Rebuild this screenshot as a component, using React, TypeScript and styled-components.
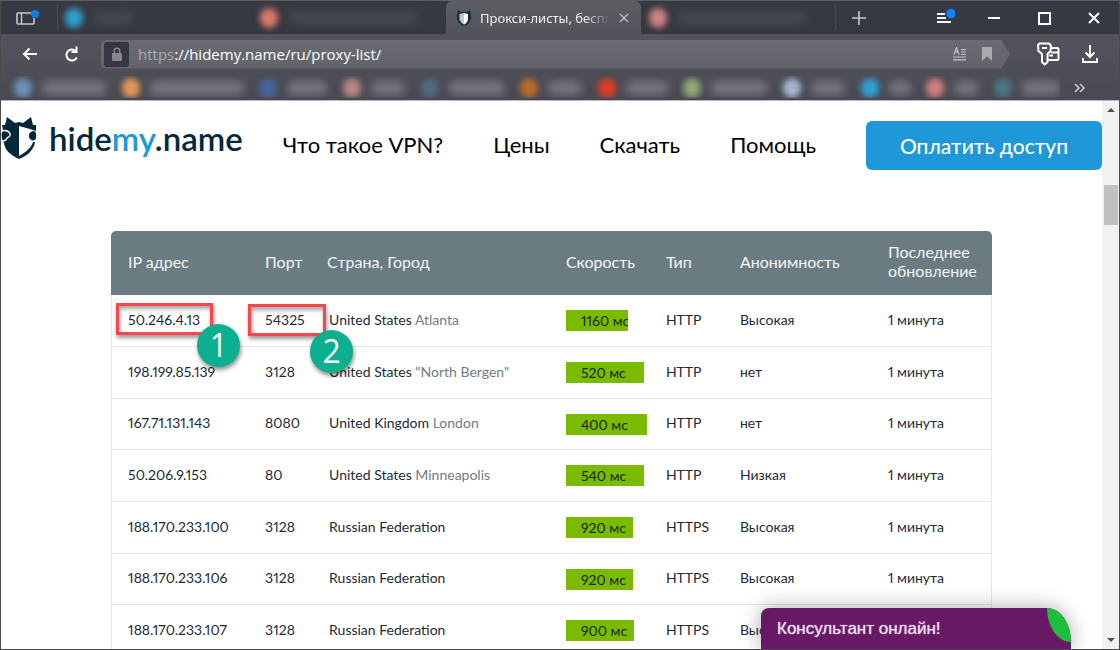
import React from 'react';
import styled, { createGlobalStyle } from 'styled-components';

const GlobalStyle = createGlobalStyle`
  *, *::before, *::after { box-sizing: border-box; }
  html, body { margin: 0; padding: 0; }
  body { font-family: Lato, sans-serif; color: #000; background: #fff; overflow: hidden; }
  button { font: inherit; color: inherit; border: 0; padding: 0; background: none; }
  a { color: inherit; text-decoration: none; }
  svg { display: block; flex: none; }
`;

const Window = styled.div`
  height: 100vh;
  display: flex;
  flex-direction: column;
  border: 1px solid #4b4b4d;
  border-top-color: #5d5e59;
  overflow: hidden;
`;

const TabStrip = styled.div`
  display: flex;
  align-items: stretch;
  flex: none;
  height: 33px;
  background: linear-gradient(#373944, #353741);
  color: #fff;
`;

const PanelButton = styled.button`
  width: 56px;
  display: flex;
  align-items: center;
  justify-content: center;
  padding-right: 2px;
`;

const TabRow = styled.div`
  display: flex;
  flex: 1;
  min-width: 0;
`;

const Tab = styled.button<{ $divided?: boolean }>`
  flex: 0 0 25%;
  min-width: 0;
  overflow: hidden;
  display: flex;
  align-items: center;
  gap: 10px;
  padding: 0 8px;
  position: relative;
  &::before {
    content: '';
    display: ${p => (p.$divided ? 'block' : 'none')};
    position: absolute;
    left: 0;
    top: 4px;
    bottom: 4px;
    width: 1px;
    background: #4a4c56;
  }
`;

const ActiveTab = styled.div`
  flex: 0 0 25%;
  min-width: 0;
  display: flex;
  align-items: center;
  gap: 9px;
  padding: 0 12px 0 11px;
  border-radius: 6px 6px 0 0;
  background: linear-gradient(#5c5d65, #52535b);
  font: 13px/20px 'Noto Sans', 'Open Sans', sans-serif;
  color: #f2f2f3;
`;

const TabTitle = styled.span`
  flex: 1;
  min-width: 0;
  overflow: hidden;
  white-space: nowrap;
  mask-image: linear-gradient(90deg, #000 80%, transparent);
`;

const Dot = styled.span<{ $color: string }>`
  flex: none;
  width: 18px;
  height: 20px;
  border-radius: 9px;
  background: ${p => p.$color};
  filter: blur(3px);
`;

const Smudge = styled.span<{ $w: number; $tone?: string }>`
  flex: none;
  width: ${p => p.$w}px;
  height: 14px;
  border-radius: 6px;
  background: ${p => p.$tone ?? '#74757e'};
  filter: blur(4px);
`;

const NewTab = styled.button`
  width: 48px;
  display: flex;
  align-items: center;
  justify-content: center;
  position: relative;
  color: #c9c9cc;
  &::before {
    content: '';
    position: absolute;
    left: 0;
    top: 4px;
    bottom: 4px;
    width: 1px;
    background: #4a4c56;
  }
`;

const WindowControls = styled.div`
  display: flex;
  margin-left: 36px;
`;

const WindowButton = styled.button`
  width: 50px;
  display: flex;
  align-items: center;
  justify-content: center;
`;

const Toolbar = styled.div`
  flex: none;
  background: linear-gradient(#53545c, #484952);
  color: #fff;
  border-bottom: 1px solid #b9b9bb;
`;

const AddressRow = styled.div`
  display: flex;
  align-items: center;
  height: 40px;
  padding: 0 8px;
`;

const ToolButton = styled.button`
  width: 42px;
  height: 36px;
  display: flex;
  align-items: center;
  justify-content: center;
`;

const AddressBar = styled.form`
  flex: 1;
  min-width: 0;
  display: flex;
  align-items: center;
  height: 29px;
  margin: 0 17px 0 8px;
  padding: 0 10px 0 3px;
  border-radius: 5px 0 0 5px;
  background: linear-gradient(#6a6b72, #62636b);
  clip-path: polygon(0 0, calc(100% - 9px) 0, 100% 50%, calc(100% - 9px) 100%, 0 100%);
`;

const LockBox = styled.button`
  width: 25px;
  height: 25px;
  border-radius: 3px;
  background: #363742;
  display: flex;
  align-items: center;
  justify-content: center;
`;

const Address = styled.div`
  flex: 1;
  margin-left: 9px;
  font: 15px/24px 'Open Sans', 'Noto Sans', sans-serif;
  color: #fff;
  white-space: nowrap;
`;

const Scheme = styled.span`
  color: #aaabaf;
`;

const BarIcon = styled.button`
  width: 27px;
  display: flex;
  justify-content: center;
  color: #c4c4c8;
`;

const BookmarkRow = styled.div`
  display: flex;
  align-items: center;
  height: 26px;
`;

const Bookmarks = styled.div`
  flex: 1;
  height: 22px;
  overflow: hidden;
  display: flex;
  align-items: center;
  justify-content: space-between;
  padding: 2px 0 0 13px;
`;

const Bookmark = styled.span`
  display: flex;
  align-items: center;
  gap: 10px;
`;

const MoreButton = styled.button`
  width: 59px;
  height: 22px;
  display: flex;
  align-items: center;
  padding: 2px 0 0 14px;
  color: #d5d5d8;
`;

const Viewport = styled.div`
  flex: 1;
  min-height: 0;
  display: flex;
  position: relative;
`;

const Page = styled.div`
  flex: 1;
  min-width: 0;
  overflow: hidden;
`;

const SiteHeader = styled.header`
  display: flex;
  align-items: center;
  height: 49px;
  margin-top: 20px;
`;

const Logo = styled.a`
  display: flex;
  align-items: center;
  gap: 12px;
  padding-bottom: 16px;
  font-size: 33px;
  line-height: 36px;
  font-weight: 600;
  color: #04273a;
`;

const LogoAccent = styled.span`
  color: #1e98d9;
`;

const Nav = styled.nav`
  display: flex;
  flex: 1;
  gap: 50px;
  margin-left: 40px;
  padding-bottom: 1px;
  font-size: 22px;
  line-height: 28px;
  white-space: nowrap;
`;

const PayButton = styled.button`
  width: 236px;
  height: 49px;
  border-radius: 6px;
  background: #1e98d9;
  color: #fff;
  font-size: 21px;
  line-height: 28px;
  font-weight: 500;
`;

const ProxyTable = styled.table`
  width: 80%;
  margin: 61px auto 0;
  table-layout: fixed;
  border-collapse: separate;
  border-spacing: 0;
  font-size: 14px;
  line-height: 18px;
  font-variant-numeric: proportional-nums;
  color: #1d2b35;
`;

const Column = styled.col<{ $w?: number }>`
  width: ${p => (p.$w ? `${p.$w}px` : 'auto')};
`;

const HeadCell = styled.th`
  height: 64px;
  padding: 0 0 4px 16px;
  background: #6a7c81;
  color: #f4f6f6;
  font-size: 16px;
  line-height: 19px;
  font-weight: 400;
  text-align: left;
  &:first-child { border-top-left-radius: 5px; padding-left: 17px; }
  &:last-child { border-top-right-radius: 5px; }
`;

const Row = styled.tr`
  height: 52px;
  &:nth-child(3n) { height: 51px; }
`;

const Cell = styled.td`
  position: relative;
  padding: 0 0 2px 16px;
  border-bottom: 1px solid #e4e6e7;
  white-space: nowrap;
  &:first-child { border-left: 1px solid #e4e6e7; }
  &:last-child { border-right: 1px solid #e4e6e7; }
`;

const PlaceCell = styled(Cell)`
  padding-left: 18px;
`;

const SpeedCell = styled(Cell)`
  padding-bottom: 0;
`;

const City = styled.span`
  color: #6f7c83;
`;

const SpeedBar = styled.div`
  height: 21px;
  padding-left: 15px;
  overflow: hidden;
  background: #7aba00;
  line-height: 21px;
  color: #16280a;
`;

const Frame = styled.span<{ $left: number; $top: number; $w: number }>`
  position: absolute;
  left: ${p => p.$left}px;
  top: ${p => p.$top}px;
  width: ${p => p.$w}px;
  height: 32px;
  border: 3px solid #f8464c;
  box-shadow: 1px 3px 4px rgba(0, 0, 0, 0.4), inset 1px 3px 4px rgba(0, 0, 0, 0.35);
`;

const StepBadge = styled.span<{ $top: number }>`
  position: absolute;
  z-index: 2;
  right: -30px;
  top: ${p => p.$top}px;
  width: 43px;
  height: 43px;
  border-radius: 50%;
  background: #0caf90;
  box-shadow: 1px 3px 4px rgba(0, 0, 0, 0.45);
  color: #fff;
  font: 500 32px/42px 'Open Sans', sans-serif;
  text-align: center;
`;

const ScrollBar = styled.div`
  flex: none;
  width: 17px;
  padding: 6px 0;
  background: #f1f1f1;
  display: flex;
  flex-direction: column;
  align-items: center;
`;

const Thumb = styled.div`
  width: 14px;
  height: 40px;
  margin: 72px 0 auto;
  background: #c1c1c1;
`;

const Chat = styled.button`
  position: absolute;
  right: 48px;
  bottom: 0;
  width: 310px;
  height: 41px;
  border-radius: 8px 24px 0 0 / 8px 34px 0 0;
  background: #681965;
  color: #eadcea;
  padding-left: 16px;
  box-shadow: 0 0 20px rgba(0, 0, 0, 0.35);
  font: 17px/38px 'Liberation Sans', Arial, sans-serif;
  text-shadow: 0 0 1px currentColor;
  text-align: left;
`;

const Leaf = styled.span`
  position: absolute;
  right: 0;
  top: 0;
  width: 24px;
  height: 34px;
  border-radius: 0 100% 0 100%;
  background: #1cbf3c;
`;

const WolfShield = () => (
  <svg width="36" height="42" viewBox="0 0 36 42" aria-hidden="true">
    <path fill="#04273a" d="M6 0 14 6 18 5 22 6 30 0 32 8 35 8 35 14 29 12 18 9V39L18 42C10 38 4 34 3 26C0 22 0 14 2 13L1 8 4 8Z" />
    <path fill="#04273a" d="M30 15C34 12 36 16 35 21C34 25 29 24 28 20C27.500 18 28 16 30 15Z" />
    <path fill="#04273a" d="M34 25C33 33 26 39 18 42V39C25 35 30 31 32 25Z" />
    <path fill="none" stroke="#fff" strokeWidth="1.4" d="M0 14.500C5 12 10 15 9 18.500C8 21 6 20 5.500 22C5 24 2 24 0 24" />
  </svg>
);

const Favicon = () => (
  <svg width="14" height="18" viewBox="0 0 14 18" aria-hidden="true">
    <path fill="#17303d" d="M1 1 4 3 7 2.500 10 3 13 1 14 6V10C13 13 11 16 7 17C3 16 1 13 0 10V6Z" />
    <path fill="#b9c9cd" d="M7 4 2.500 5V11C4 13 5 14.500 7 15.500Z" />
    <path fill="#fff" d="M7 4 11 5V11C10 13 9 14.500 7 15.500Z" />
  </svg>
);

type Mark = { name: string; color: string; w: number };

const bookmarks: Mark[] = [
  { name: 'b1', color: '#6e90b8', w: 64 },
  { name: 'b2', color: '#e09a58', w: 94 },
  { name: 'b3', color: '#44659c', w: 40 },
  { name: 'b4', color: '#b98585', w: 34 },
  { name: 'b5', color: '#4f6a80', w: 56 },
  { name: 'b6', color: '#b96a2a', w: 34 },
  { name: 'b7', color: '#e03c26', w: 42 },
  { name: 'b8', color: '#93a875', w: 56 },
  { name: 'b9', color: '#a9b6d2', w: 34 },
  { name: 'b10', color: '#2fa3d6', w: 22 },
  { name: 'b11', color: '#d07f7f', w: 24 },
  { name: 'b12', color: '#4a7680', w: 38 },
];

type Proxy = {
  ip: string; port: string; country: string; city?: string;
  speed: number; bar: number; type: string; anon: string;
};

const proxies: Proxy[] = [
  { ip: '50.246.4.13', port: '54325', country: 'United States', city: 'Atlanta', speed: 1160, bar: 62, type: 'HTTP', anon: 'Высокая' },
  { ip: '198.199.85.139', port: '3128', country: 'United States', city: '"North Bergen"', speed: 520, bar: 78, type: 'HTTP', anon: 'нет' },
  { ip: '167.71.131.143', port: '8080', country: 'United Kingdom', city: 'London', speed: 400, bar: 81, type: 'HTTP', anon: 'нет' },
  { ip: '50.206.9.153', port: '80', country: 'United States', city: 'Minneapolis', speed: 540, bar: 78, type: 'HTTP', anon: 'Низкая' },
  { ip: '188.170.233.100', port: '3128', country: 'Russian Federation', speed: 920, bar: 67, type: 'HTTPS', anon: 'Высокая' },
  { ip: '188.170.233.106', port: '3128', country: 'Russian Federation', speed: 920, bar: 67, type: 'HTTPS', anon: 'Высокая' },
  { ip: '188.170.233.107', port: '3128', country: 'Russian Federation', speed: 900, bar: 68, type: 'HTTPS', anon: 'Высокая' },
];

export default function App() {
  return (
    <>
      <GlobalStyle />
      <Window>
        <TabStrip>
          <PanelButton aria-label="Боковая панель">
            <svg width="24" height="16" viewBox="0 0 24 16" fill="none">
              <rect x="1" y="3" width="17" height="11" rx="1" stroke="#c8c8cc" strokeWidth="1.6" />
              <path d="M5.5 3V14" stroke="#c8c8cc" strokeWidth="1.4" />
              <circle cx="19" cy="4" r="4.2" fill="#0b7fe0" />
            </svg>
          </PanelButton>
          <TabRow>
            <Tab $divided aria-label="Вкладка"><Dot $color="#2f9fcb" /><Smudge $w={40} $tone="#454750" /></Tab>
            <Tab aria-label="Вкладка"><Dot $color="#d97a69" /><Smudge $w={130} $tone="#454750" /></Tab>
            <ActiveTab>
              <Favicon />
              <TabTitle>Прокси-листы, бесплатные</TabTitle>
              <svg width="10" height="10" viewBox="0 0 10 10" stroke="#c6c6ca" strokeWidth="1.2"><path d="M1 1 9 9M9 1 1 9" /></svg>
            </ActiveTab>
            <Tab aria-label="Вкладка"><Dot $color="#cf8285" /><Smudge $w={130} $tone="#454750" /></Tab>
          </TabRow>
          <NewTab aria-label="Новая вкладка">
            <svg width="16" height="16" viewBox="0 0 16 16" stroke="currentColor" strokeWidth="1.6"><path d="M8 1V15M1 8H15" /></svg>
          </NewTab>
          <WindowControls>
            <WindowButton aria-label="Меню">
              <svg width="22" height="20" viewBox="0 0 22 20" stroke="#fff" strokeWidth="1.8">
                <path d="M4 6H12M4 10H13M4 14H18" /><circle cx="18" cy="5.5" r="4.8" fill="#1483ff" stroke="none" />
              </svg>
            </WindowButton>
            <WindowButton aria-label="Свернуть">
              <svg width="14" height="14" viewBox="0 0 14 14" stroke="#fff" strokeWidth="2"><path d="M1 7H13" /></svg>
            </WindowButton>
            <WindowButton aria-label="Развернуть">
              <svg width="14" height="14" viewBox="0 0 14 14" fill="none" stroke="#fff" strokeWidth="2"><rect x="2" y="2" width="11" height="11" /></svg>
            </WindowButton>
            <WindowButton aria-label="Закрыть">
              <svg width="12" height="12" viewBox="0 0 12 12" stroke="#fff" strokeWidth="2"><path d="M1 1 11 11M11 1 1 11" /></svg>
            </WindowButton>
          </WindowControls>
        </TabStrip>
        <Toolbar>
          <AddressRow>
            <ToolButton aria-label="Назад">
              <svg width="16" height="14" viewBox="0 0 16 14" fill="none" stroke="#fff" strokeWidth="2"><path d="M15 7H2M7.500 1.500 2 7 7.500 12.500" /></svg>
            </ToolButton>
            <ToolButton aria-label="Обновить">
              <svg width="16" height="18" viewBox="0 0 16 18" fill="none" stroke="#fff" strokeWidth="2"><path d="M12.800 12.500A5.500 5.500 0 1 1 11.500 5.800" /><path d="M7.500 7H12.500V1.500" /></svg>
            </ToolButton>
            <AddressBar>
              <LockBox type="button" aria-label="Защищено">
                <svg width="12" height="15" viewBox="0 0 12 15"><rect x="1" y="6" width="10" height="8" rx="1" fill="#858790" /><path d="M3.200 6V4A2.800 2.800 0 0 1 8.800 4V6" fill="none" stroke="#858790" strokeWidth="1.500" /></svg>
              </LockBox>
              <Address><Scheme>https</Scheme>://hidemy.name/ru/proxy-list/</Address>
              <BarIcon type="button" aria-label="Режим чтения">
                <svg width="14" height="14" viewBox="0 0 14 14" fill="none" stroke="currentColor" strokeWidth="1.2"><path d="M1 7.500 3.500 1 6 7.500M2 5H5M8 2.500H13M8 5H13M8 7.500H13M0 10H13M0 12.800H13" /></svg>
              </BarIcon>
              <BarIcon type="button" aria-label="Закладка">
                <svg width="12" height="14" viewBox="0 0 12 14" fill="#a9a9ae"><path d="M1 0H11V14L6 9.500 1 14Z" /></svg>
              </BarIcon>
            </AddressBar>
            <ToolButton aria-label="Пароли и карты">
              <svg width="24" height="24" viewBox="0 0 24 24" fill="none" stroke="#fff" strokeWidth="2" strokeLinejoin="round">
                <path d="M3.500 1.500H13L15 3.500 14.500 9 11.500 12V20L8.700 22.500 6 20V12L2.500 9 2 3Z" />
                <path d="M6 6H11" />
                <path d="M15 6H21.500L22.500 7V17L21.500 18H12M15 10.500H22.500M13 13.500H17" />
              </svg>
            </ToolButton>
            <ToolButton aria-label="Загрузки">
              <svg width="16" height="18" viewBox="0 0 16 18" fill="none" stroke="#fff" strokeWidth="2"><path d="M8 0V12M3.500 7.500 8 12 12.500 7.500M1 13V17H15V13" /></svg>
            </ToolButton>
          </AddressRow>
          <BookmarkRow>
            <Bookmarks>
              {bookmarks.map(b => <Bookmark key={b.name}><Dot $color={b.color} /><Smudge $w={b.w} /></Bookmark>)}
            </Bookmarks>
            <MoreButton aria-label="Ещё закладки">
              <svg width="12" height="10" viewBox="0 0 12 10" fill="none" stroke="currentColor" strokeWidth="1.4"><path d="M1 1 5 5 1 9M6 1 10 5 6 9" /></svg>
            </MoreButton>
          </BookmarkRow>
        </Toolbar>
        <Viewport>
          <Page>
            <SiteHeader>
              <Logo href="#home">
                <WolfShield />
                <span>hide<LogoAccent>my</LogoAccent>.name</span>
              </Logo>
              <Nav>
                <a href="#vpn">Что такое VPN?</a>
                <a href="#prices">Цены</a>
                <a href="#download">Скачать</a>
                <a href="#help">Помощь</a>
              </Nav>
              <PayButton>Оплатить доступ</PayButton>
            </SiteHeader>
            <ProxyTable>
              <colgroup>
                <Column $w={138} /><Column $w={62} /><Column /><Column $w={100} />
                <Column $w={74} /><Column $w={148} /><Column $w={120} />
              </colgroup>
              <thead>
                <tr>
                  <HeadCell>IP адрес</HeadCell>
                  <HeadCell>Порт</HeadCell>
                  <HeadCell>Страна, Город</HeadCell>
                  <HeadCell>Скорость</HeadCell>
                  <HeadCell>Тип</HeadCell>
                  <HeadCell>Анонимность</HeadCell>
                  <HeadCell>Последнее обновление</HeadCell>
                </tr>
              </thead>
              <tbody>
                {proxies.map((p, i) => (
                  <Row key={p.ip}>
                    <Cell>
                      {p.ip}
                      {i === 0 && <Frame $left={4} $top={8} $w={97}><StepBadge $top={18}>1</StepBadge></Frame>}
                    </Cell>
                    <Cell>
                      {p.port}
                      {i === 0 && <Frame $left={-1} $top={9} $w={78}><StepBadge $top={23}>2</StepBadge></Frame>}
                    </Cell>
                    <PlaceCell>{p.country} {p.city && <City>{p.city}</City>}</PlaceCell>
                    <SpeedCell><SpeedBar style={{ width: p.bar }}>{p.speed} мс</SpeedBar></SpeedCell>
                    <Cell>{p.type}</Cell>
                    <Cell>{p.anon}</Cell>
                    <Cell>1 минута</Cell>
                  </Row>
                ))}
              </tbody>
            </ProxyTable>
          </Page>
          <ScrollBar>
            <svg width="8" height="6" viewBox="0 0 8 6" fill="#505050"><path d="M0 5 4 1 8 5Z" /></svg>
            <Thumb />
            <svg width="8" height="6" viewBox="0 0 8 6" fill="#505050"><path d="M0 1 4 5 8 1Z" /></svg>
          </ScrollBar>
          <Chat>Консультант онлайн!<Leaf /></Chat>
        </Viewport>
      </Window>
    </>
  );
}
